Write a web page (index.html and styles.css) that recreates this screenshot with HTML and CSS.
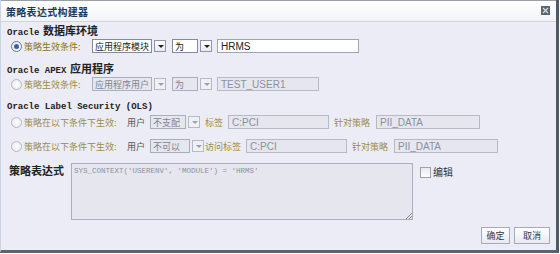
FILE: index.html
```html
<!DOCTYPE html>
<html lang="zh">

<head>
    <meta charset="UTF-8">
    <title>策略表达式构建器</title>
    <link rel="stylesheet" href="styles.css">
</head>

<body>
    <div class="dialog">
        <!-- Title bar -->
        <div class="titlebar">
            <span class="title">策略表达式构建器</span>
            <span class="close"><svg width="9" height="9" viewBox="0 0 9 9"><rect x="0" y="0" width="9" height="9" fill="#5c6670"/><path d="M2 2L7 7M7 2L2 7" stroke="#d8dde2" stroke-width="1.2"/></svg></span>
        </div>

        <div class="content">
            <div class="heading"><span class="mono">Oracle</span> 数据库环境</div>
            <div class="row">
                <span class="radio checked"></span>
                <span class="lbl first">策略生效条件:</span>
                <span class="sel w60">应用程序模块</span><span class="arrow"></span>
                <span class="sel w26 ml">为</span><span class="arrow"></span>
                <span class="input w142">HRMS</span>
            </div>

            <div class="heading h2"><span class="mono">Oracle APEX</span> 应用程序</div>
            <div class="row off">
                <span class="radio"></span>
                <span class="lbl first">策略生效条件:</span>
                <span class="sel w60">应用程序用户</span><span class="arrow"></span>
                <span class="sel w26 ml">为</span><span class="arrow"></span>
                <span class="input w102">TEST_USER1</span>
            </div>

            <div class="heading h3"><span class="mono">Oracle Label Security (OLS)</span></div>
            <div class="row off r3">
                <span class="radio"></span>
                <span class="lbl cond">策略在以下条件下生效:</span>
                <span class="txt">用户</span>
                <span class="sel w36">不支配</span><span class="arrow"></span>
                <span class="lbl">标签</span>
                <span class="input w101">C:PCI</span>
                <span class="lbl">针对策略</span>
                <span class="input w104 ml">PII_DATA</span>
            </div>
            <div class="row off r4">
                <span class="radio"></span>
                <span class="lbl cond">策略在以下条件下生效:</span>
                <span class="txt">用户</span>
                <span class="sel w40">不可以</span><span class="arrow"></span>
                <span class="lbl tight">访问标签</span>
                <span class="input w101">C:PCI</span>
                <span class="lbl">针对策略</span>
                <span class="input w104 ml">PII_DATA</span>
            </div>

            <div class="expr">
                <span class="expr-label">策略表达式</span>
                <div class="textarea">SYS_CONTEXT('USERENV', 'MODULE') = 'HRMS'<span class="grip"></span></div>
                <span class="check"></span>
                <span class="edit">编辑</span>
            </div>

            <div class="buttons">
                <span class="btn ok">确定</span>
                <span class="btn cancel">取消</span>
            </div>
        </div>
    </div>
</body>

</html>
```

FILE: styles.css
```css
body {
    margin: 0;
    padding: 0;
    background-color: #ffffff;
    font-family: "Noto Sans CJK SC", "DejaVu Sans", sans-serif;
    font-size: 9px;
}

.dialog {
    width: 559px;
    height: 253px;
    box-sizing: border-box;
    background-color: #ebecf5;
    border-left: 1px solid #c8d4e4;
    border-right: 3px solid #4e5a66;
    border-bottom: 3px solid #5a6470;
}

.titlebar {
    height: 20px;
    display: flex;
    align-items: center;
    justify-content: space-between;
    padding: 0 6px 0 5px;
    background: linear-gradient(#ffffff, #f2f3f8);
    border-bottom: 1px solid #cfd3de;
    border-top: 1px solid #9aa0a8;
}

.title {
    font-weight: bold;
    font-size: 10px;
    color: #1d3b58;
    letter-spacing: 0.3px;
}

.close {
    display: flex;
    margin-top: -2px;
}

.content {
    padding: 0 5px;
}

.heading {
    height: 16px;
    line-height: 16px;
    font-weight: bold;
    font-size: 11px;
    color: #222222;
    padding-left: 1px;
}

.mono {
    font-family: "Liberation Mono", "DejaVu Sans Mono", monospace;
    font-size: 9px;
    font-weight: bold;
    margin-right: 1px;
}

.h2 {
    margin-top: 6px;
}

.h3 {
    margin-top: 4px;
}

.row {
    height: 16px;
    display: flex;
    align-items: center;
    gap: 5px;
    padding-left: 5px;
}

.r3 {
    margin-top: 2px;
}

.r4 {
    margin-top: 8px;
}

.radio {
    width: 9px;
    height: 9px;
    flex: none;
    border-radius: 50%;
    border: 1px solid #b4bac6;
    background: radial-gradient(#ffffff, #e4e6ee);
    margin-right: -3px;
    position: relative;
}

.radio.checked {
    border-color: #6a7c94;
}

.radio.checked::after {
    content: "";
    position: absolute;
    left: 2px;
    top: 2px;
    width: 5px;
    height: 5px;
    border-radius: 50%;
    background: #3660a0;
}

.lbl {
    color: #887410;
    white-space: nowrap;
}

.lbl.first {
    width: 63px;
}

.lbl.cond {
    width: 98px;
}

.lbl.tight {
    margin-left: -4px;
}

.txt {
    color: #333333;
    white-space: nowrap;
}

.row.off .lbl {
    color: #9c8c44;
}

.row.off .txt {
    color: #555555;
}

.sel {
    height: 14px;
    display: flex;
    align-items: center;
    flex: none;
    border: 1px solid #7f8ca0;
    background: #ffffff;
    color: #222222;
    padding-left: 2px;
    box-sizing: border-box;
    white-space: nowrap;
    overflow: hidden;
}

.row.off .sel {
    background: #e6e6ee;
    border-color: #a8b0c0;
    color: #7c8494;
}

.ml {
    margin-left: 1px;
}

.arrow {
    width: 12px;
    height: 12px;
    flex: none;
    box-sizing: border-box;
    border: 1px solid #8c96a8;
    background: linear-gradient(#ffffff, #e8eaf0);
    margin-left: -3px;
    position: relative;
}

.arrow::after {
    content: "";
    position: absolute;
    left: 3px;
    top: 4px;
    border-left: 3px solid transparent;
    border-right: 3px solid transparent;
    border-top: 3px solid #222222;
}

.row.off .arrow {
    border-color: #b4bac6;
    background: #f0f0f5;
}

.row.off .arrow::after {
    border-top-color: #9aa0aa;
}

.w60 {
    width: 60px;
}

.w26 {
    width: 26px;
}

.w36 {
    width: 36px;
}

.w40 {
    width: 40px;
}

.input {
    height: 14px;
    display: flex;
    align-items: center;
    flex: none;
    border: 1px solid #9ea6b6;
    background: #ffffff;
    padding-left: 3px;
    box-sizing: border-box;
    color: #222222;
    font-family: "Liberation Sans", Arial, sans-serif;
    font-size: 10px;
}

.row.off .input {
    background: #e6e6ee;
    border-color: #b6bac6;
    color: #8a90a0;
}

.w142 {
    width: 142px;
}

.w102 {
    width: 102px;
}

.w101 {
    width: 101px;
}

.w104 {
    width: 104px;
}

.expr {
    display: flex;
    align-items: flex-start;
    margin-top: 9px;
    padding-left: 3px;
}

.expr-label {
    font-weight: bold;
    font-size: 11px;
    color: #222222;
    width: 62px;
    margin-top: -1px;
}

.textarea {
    width: 342px;
    height: 57px;
    box-sizing: border-box;
    border: 1px solid #a8aebb;
    background: #e6e6ee;
    color: #8c909c;
    font-family: "Liberation Mono", monospace;
    font-size: 7.5px;
    padding: 3px 2px;
    position: relative;
}

.grip {
    position: absolute;
    right: 0;
    bottom: 0;
    width: 6px;
    height: 6px;
    background: linear-gradient(135deg, transparent 45%, #888 45%, #888 55%, transparent 55%, transparent 70%, #888 70%, #888 80%, transparent 80%);
}

.check {
    width: 9px;
    height: 9px;
    flex: none;
    border: 1px solid #9aa2b0;
    background: linear-gradient(#e8e8ee, #ffffff);
    margin: 4px 2px 0 7px;
}

.edit {
    color: #333333;
    font-size: 10px;
    margin-top: 1px;
}

.buttons {
    display: flex;
    justify-content: flex-end;
    gap: 4px;
    margin-top: 7px;
    padding-right: 1px;
}

.btn {
    height: 17px;
    display: flex;
    align-items: center;
    justify-content: center;
    border: 1px solid #a4acbc;
    background: linear-gradient(#ffffff, #e8eaf0);
    color: #2a3a50;
    box-sizing: border-box;
}

.ok {
    width: 29px;
}

.cancel {
    width: 36px;
}
```
